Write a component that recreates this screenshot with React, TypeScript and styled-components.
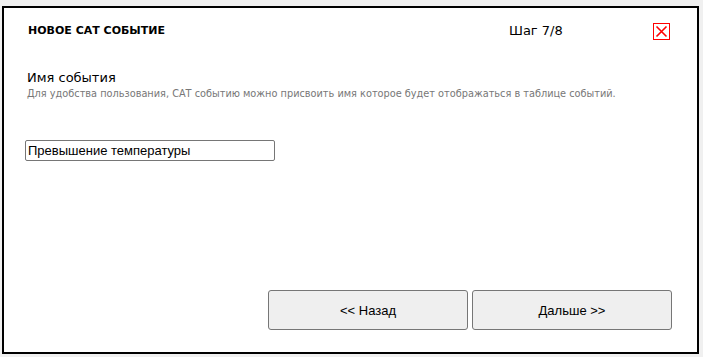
import styled, { createGlobalStyle } from "styled-components";

const GlobalStyle = createGlobalStyle`
  html, body {
    margin: 0;
    padding: 0;
    background-color: #f0f0f0;
  }
  body {
    font-family: "DejaVu Sans", Verdana, sans-serif;
  }
`;

const Page = styled.div`
  width: 703px;
  height: 357px;
  overflow: hidden;
  padding: 6px 0 0 2px;
  box-sizing: border-box;
`;

const Dialog = styled.div`
  width: 697px;
  height: 348px;
  box-sizing: border-box;
  border: 2px solid #000;
  background-color: #fff;
  display: flex;
  flex-direction: column;
`;

const Header = styled.div`
  height: 44px;
  display: flex;
  align-items: center;
  padding: 0 27px 0 24px;
`;

const Title = styled.h1`
  flex: 1;
  margin: 0;
  font-size: 11px;
  font-weight: bold;
  color: #000;
`;

const Step = styled.span`
  width: 144px;
  font-size: 13px;
  color: #000;
`;

const CloseButton = styled.button`
  width: 17px;
  height: 17px;
  padding: 0;
  border: none;
  background: none;
  cursor: pointer;
  display: flex;
  margin-top: 2px;
`;

const Body = styled.div`
  padding: 18px 24px 0 23px;
  display: flex;
  flex-direction: column;
`;

const Label = styled.div`
  font-size: 13px;
  color: #000;
  line-height: 16px;
`;

const Hint = styled.div`
  font-size: 9.75px;
  color: #777;
  margin-top: 2px;
  line-height: 12px;
`;

const NameInput = styled.input`
  margin-top: 40px;
  margin-left: -2px;
  width: 250px;
  height: 21px;
  box-sizing: border-box;
  border: 1px solid #767676;
  border-radius: 2px;
  padding: 0 2px;
  font-family: "Liberation Sans", Arial, sans-serif;
  font-size: 13px;
  color: #000;
  outline: none;
`;

const Footer = styled.div`
  margin-top: auto;
  display: flex;
  justify-content: flex-end;
  gap: 4px;
  padding: 0 25px 22px 0;
`;

const NavButton = styled.button`
  width: 200px;
  height: 40px;
  box-sizing: border-box;
  background-color: #efefef;
  border: 1px solid #767676;
  border-radius: 3px;
  font-family: "Liberation Sans", Arial, sans-serif;
  font-size: 13px;
  color: #000;
  cursor: pointer;
`;

function CloseIcon() {
  return (
    <svg width="17" height="17" viewBox="0 0 17 17">
      <rect x="0.5" y="0.5" width="16" height="16" fill="#fff" stroke="#ff0000" strokeWidth="1" />
      <path d="M3.5 3.5 L13.5 13.5 M13.5 3.5 L3.5 13.5" stroke="#ff0000" strokeWidth="1.6" />
    </svg>
  );
}

export default function App() {
  return (
    <>
      <GlobalStyle />
      <Page>
        <Dialog>
          <Header>
            <Title>НОВОЕ САТ СОБЫТИЕ</Title>
            <Step>Шаг 7/8</Step>
            <CloseButton aria-label="Закрыть">
              <CloseIcon />
            </CloseButton>
          </Header>
          <Body>
            <Label>Имя события</Label>
            <Hint>
              Для удобства пользования, САТ событию можно присвоить имя которое будет отображаться в таблице событий.
            </Hint>
            <NameInput defaultValue="Превышение температуры" />
          </Body>
          <Footer>
            <NavButton>&lt;&lt; Назад</NavButton>
            <NavButton>Дальше &gt;&gt;</NavButton>
          </Footer>
        </Dialog>
      </Page>
    </>
  );
}
